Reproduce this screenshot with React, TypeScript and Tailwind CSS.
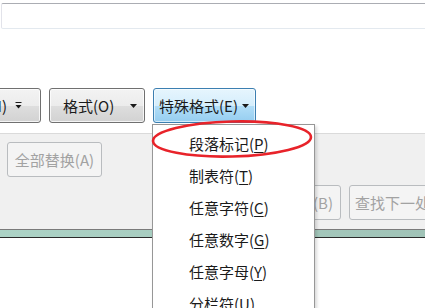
import React from "react";

const font = "font-['Noto_Sans_CJK_SC','Noto_Sans',sans-serif]";

function DownArrow() {
  return (
    <svg width="7" height="4" viewBox="0 0 7 4" className="shrink-0">
      <polygon points="0,0 7,0 3.5,4" fill="#1a1a1a" />
    </svg>
  );
}

function MoreIcon() {
  return (
    <svg width="7" height="7" viewBox="0 0 7 7" className="shrink-0">
      <rect x="0.5" y="0" width="6" height="1" fill="#1a1a1a" />
      <polygon points="0.5,3 6.5,3 3.5,6.5" fill="#1a1a1a" />
    </svg>
  );
}

const normalBtn =
  "flex h-[35px] items-center rounded-[3px] border border-[#707070] bg-[linear-gradient(to_bottom,#f3f3f3_0%,#ececec_50%,#dedede_51%,#d2d2d2_100%)] shadow-[inset_0_0_0_1px_rgba(255,255,255,0.75)] text-[15px] text-[#1a1a1a]";

const disabledBtn =
  "flex h-[35px] items-center justify-center rounded-[3px] border border-[#b9bcbf] bg-[#f4f4f4] text-[15px] text-[#a2a2a2]";

const menuItems = [
  { label: "段落标记", key: "P" },
  { label: "制表符", key: "T" },
  { label: "任意字符", key: "C" },
  { label: "任意数字", key: "G" },
  { label: "任意字母", key: "Y" },
  { label: "分栏符", key: "U" },
];

export default function App() {
  return (
    <div className={`relative h-[308px] w-[425px] overflow-hidden bg-white ${font}`}>
      {/* Search text box */}
      <div className="ml-[1px] mt-[3px] h-[26px] w-[440px] rounded-[2px] border border-[#e2e3ea] border-t-[#abadb3] border-b-[#e3e9ef] bg-white" />

      {/* Option buttons */}
      <div className="mt-[59px] flex h-[35px] gap-[8px]">
        <div className={`${normalBtn} -ml-[71px] w-[112px] justify-end gap-[8px] pr-[18px]`}>
          <span className="leading-none whitespace-nowrap">高级搜索(M)</span>
          <MoreIcon />
        </div>
        <div className={`${normalBtn} w-[96px] justify-between pl-[13px] pr-[7px]`}>
          <span className="leading-none">格式(O)</span>
          <DownArrow />
        </div>
        <div className="flex h-[35px] w-[103px] items-center justify-between rounded-[3px] border border-[#3c7fb1] bg-[linear-gradient(to_bottom,#e6f5fd_0%,#d5eefc_50%,#b2def8_51%,#95cdf0_100%)] pl-[5px] pr-[6px] text-[15px] text-[#1a1a1a] shadow-[inset_0_0_0_1px_rgba(255,255,255,0.6)]">
          <span className="leading-none whitespace-nowrap">特殊格式(E)</span>
          <DownArrow />
        </div>
      </div>

      {/* Action panel */}
      <div className="mt-[10px] h-[96px] border-t border-[#dadada] bg-[#f0f0f0] pt-[8px]">
        <div className="flex pl-[7px]">
          <div className={`${disabledBtn} w-[95px]`}>
            <span className="leading-none">全部替换(A)</span>
          </div>
        </div>
        <div className="mt-[8px] flex gap-[8px] pl-[230px]">
          <div className={`${disabledBtn} w-[111px] shrink-0 justify-end pr-[7px]`}>
            <span className="leading-none whitespace-nowrap">查找上一处(B)</span>
          </div>
          <div className={`${disabledBtn} w-[112px] shrink-0 justify-start pl-[5px]`}>
            <span className="leading-none whitespace-nowrap">查找下一处(F)</span>
          </div>
        </div>
      </div>

      {/* Progress strip */}
      <div className="h-[1px] bg-[#7a7a7a]" />
      <div className="h-[7px] bg-gradient-to-r from-[#acd3c6] to-[#a0c3b7]" />
      <div className="h-[1px] bg-[#2a2a2a]" />

      {/* Dropdown menu */}
      <div className="absolute left-[152px] top-[124px] h-[200px] w-[163px] border border-[#979797] bg-white pt-[2px] shadow-[2px_2px_3px_rgba(0,0,0,0.15)]">
        {menuItems.map((item) => (
          <div key={item.key} className="flex h-[32px] items-center pl-[36px] text-[15px] text-[#1a1a1a]">
            <span className="leading-none">
              {item.label}(<span className="underline underline-offset-2">{item.key}</span>)
            </span>
          </div>
        ))}
      </div>

      {/* Red annotation circle */}
      <svg className="absolute left-[150px] top-[118px]" width="166" height="44" viewBox="0 0 166 44">
        <ellipse cx="82" cy="21" rx="79" ry="17.5" fill="none" stroke="#e8232a" strokeWidth="2.6" transform="rotate(-1.5 82 21)" />
      </svg>
    </div>
  );
}
